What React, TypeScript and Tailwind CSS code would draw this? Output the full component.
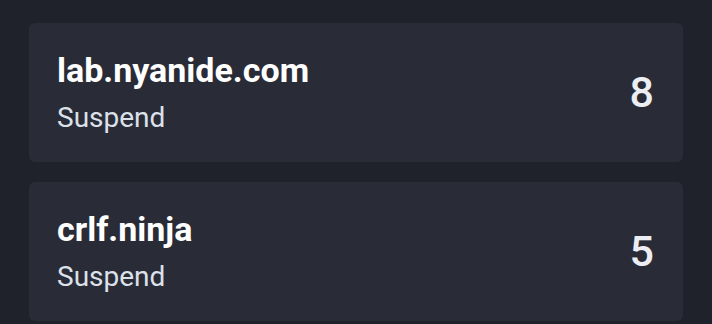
import React from "react";

type Site = { domain: string; status: string; count: number };

const sites: Site[] = [
  { domain: "lab.nyanide.com", status: "Suspend", count: 8 },
  { domain: "crlf.ninja", status: "Suspend", count: 5 },
];

const SiteCard: React.FC<{ site: Site }> = ({ site }) => (
  <div className="flex h-[139px] items-center justify-between rounded-md bg-[#292c37] pl-[28px] pr-[29px]">
    <div className="flex flex-col">
      <span className="text-[34px] font-bold leading-[40px] text-white">{site.domain}</span>
      <span className="mt-[11px] text-[28px] leading-[34px] text-[#dde1ea]">{site.status}</span>
    </div>
    <span className="text-[43px] font-medium leading-none text-[#eceef3]">{site.count}</span>
  </div>
);

const App: React.FC = () => (
  <div
    className="h-[324px] w-[712px] overflow-hidden bg-[#1f222a] px-[29px] pt-[23px]"
    style={{ fontFamily: "Roboto, 'Noto Sans', sans-serif" }}
  >
    <div className="flex flex-col gap-[20px]">
      {sites.map((site) => (
        <SiteCard key={site.domain} site={site} />
      ))}
    </div>
  </div>
);

export default App;
